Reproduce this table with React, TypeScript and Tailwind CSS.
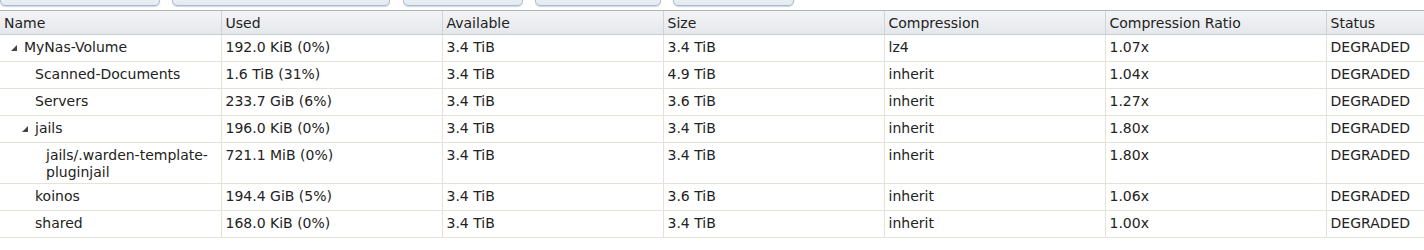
import React from "react";

type Row = {
  name: string;
  depth: number;
  expander?: boolean;
  used: string;
  avail: string;
  size: string;
  comp: string;
  ratio: string;
  status: string;
  tall?: boolean;
};

const rows: Row[] = [
  { name: "MyNas-Volume", depth: 0, expander: true, used: "192.0 KiB (0%)", avail: "3.4 TiB", size: "3.4 TiB", comp: "lz4", ratio: "1.07x", status: "DEGRADED" },
  { name: "Scanned-Documents", depth: 1, used: "1.6 TiB (31%)", avail: "3.4 TiB", size: "4.9 TiB", comp: "inherit", ratio: "1.04x", status: "DEGRADED" },
  { name: "Servers", depth: 1, used: "233.7 GiB (6%)", avail: "3.4 TiB", size: "3.6 TiB", comp: "inherit", ratio: "1.27x", status: "DEGRADED" },
  { name: "jails", depth: 1, expander: true, used: "196.0 KiB (0%)", avail: "3.4 TiB", size: "3.4 TiB", comp: "inherit", ratio: "1.80x", status: "DEGRADED" },
  { name: "jails/.warden-template-pluginjail", depth: 2, used: "721.1 MiB (0%)", avail: "3.4 TiB", size: "3.4 TiB", comp: "inherit", ratio: "1.80x", status: "DEGRADED", tall: true },
  { name: "koinos", depth: 1, used: "194.4 GiB (5%)", avail: "3.4 TiB", size: "3.6 TiB", comp: "inherit", ratio: "1.06x", status: "DEGRADED" },
  { name: "shared", depth: 1, used: "168.0 KiB (0%)", avail: "3.4 TiB", size: "3.4 TiB", comp: "inherit", ratio: "1.00x", status: "DEGRADED" },
];

const headers = ["Name", "Used", "Available", "Size", "Compression", "Compression Ratio", "Status"];

function Arrow() {
  return (
    <svg width="8" height="8" viewBox="0 0 8 8" className="mr-[6px] shrink-0">
      <polygon points="7,1 7,7 1,7" fill="#444" />
    </svg>
  );
}

export default function App() {
  return (
    <div className="w-[1424px] h-[250px] overflow-hidden bg-white text-[14px] text-[#222]" style={{ fontFamily: '"DejaVu Sans", Verdana, sans-serif' }}>
      {/* toolbar buttons (cut off at top) */}
      <div className="flex h-[10px] items-end">
        {[{ l: 0, w: 160 }, { l: 12, w: 218 }, { l: 13, w: 120 }, { l: 12, w: 126 }, { l: 12, w: 121 }].map((b, i) => (
          <div
            key={i}
            className="h-[16px] mb-[4px] rounded-b-[5px] border border-[#a9bccd] bg-gradient-to-b from-[#f4f7fa] to-[#e3eaf1] shadow-[0_1px_1px_rgba(120,140,160,0.35)]"
            style={{ marginLeft: b.l, width: b.w }}
          />
        ))}
      </div>

      <table className="border-collapse table-fixed w-[1480px]">
        <colgroup>
          <col className="w-[221px]" />
          <col className="w-[221px]" />
          <col className="w-[221px]" />
          <col className="w-[221px]" />
          <col className="w-[221px]" />
          <col className="w-[221px]" />
          <col className="w-[154px]" />
        </colgroup>
        <thead>
          <tr className="h-[24px] bg-gradient-to-b from-[#f3f4f6] to-[#e4e7eb]">
            {headers.map((h, i) => (
              <th
                key={h}
                className={`text-left font-normal px-[4px] pt-[1px] align-middle border-t border-t-[#b3b3b3] border-b border-b-[#c9cdd2] ${i > 0 ? "border-l border-l-[#d0d3d7]" : ""}`}
              >
                {h}
              </th>
            ))}
          </tr>
        </thead>
        <tbody>
          {rows.map((r) => (
            <tr key={r.name} className={`${r.tall ? "h-[41px]" : "h-[27px]"} border-b border-[#e6e2d6]`}>
              <td className="px-[4px] align-top pt-[4px] leading-[17px]">
                <div className="flex items-start" style={{ paddingLeft: r.depth * 11 + (r.expander ? 6 : 20) }}>
                  {r.expander && (
                    <span className="mt-[5px]">
                      <Arrow />
                    </span>
                  )}
                  <span className="whitespace-normal">{r.name}</span>
                </div>
              </td>
              {[r.used, r.avail, r.size, r.comp, r.ratio, r.status].map((v, i) => (
                <td key={i} className="px-[4px] align-top pt-[4px] leading-[17px] border-l border-[#e6e2d6]">
                  {v}
                </td>
              ))}
            </tr>
          ))}
        </tbody>
      </table>
    </div>
  );
}
